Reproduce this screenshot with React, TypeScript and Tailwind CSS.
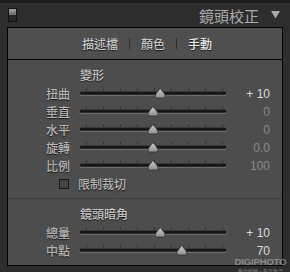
import React from 'react';

const TICKS = [7, 24, 41, 58, 75, 92, 109, 126, 143];

interface SliderProps {
  pos: number; // 0..1
}

function Slider({ pos }: SliderProps) {
  const cx = 2 + pos * 144;
  return (
    <svg width="148" height="18" viewBox="0 0 148 18" className="block">
      <defs>
        <linearGradient id="thumb" x1="0" y1="0" x2="0" y2="1">
          <stop offset="0" stopColor="#d0d0d0" />
          <stop offset="1" stopColor="#8c8c8c" />
        </linearGradient>
      </defs>
      {TICKS.map((x) => (
        <rect key={x} x={x} y={3} width={1} height={3} fill="#333" />
      ))}
      <rect x={0} y={6.5} width={148} height={4.5} rx={2.2} fill="#6c6c6c" />
      <rect x={0.5} y={6.5} width={147} height={3.2} rx={1.6} fill="#161616" />
      <path
        d={`M${cx} 3.5 L${cx + 4.2} 8.8 Q${cx + 6} 12.5 ${cx + 3.2} 13 L${cx - 3.2} 13 Q${cx - 6} 12.5 ${cx - 4.2} 8.8 Z`}
        fill="url(#thumb)"
        stroke="#2a2a2a"
        strokeWidth="0.7"
      />
    </svg>
  );
}

interface RowProps {
  label: string;
  pos: number;
  value: string;
  bright?: boolean;
}

function Row({ label, pos, value, bright }: RowProps) {
  return (
    <div className="flex h-[18px] items-center">
      <div className="w-[62px] text-right text-[12px] font-medium leading-none text-[#b6b6b6] [text-shadow:0_1px_1px_rgba(0,0,0,0.7)]">
        {label}
      </div>
      <div className="ml-[9px]">
        <Slider pos={pos} />
      </div>
      <div
        className={`w-[43px] text-right text-[12px] leading-[11px] [font-family:'Liberation_Sans',sans-serif] ${
          bright ? 'text-[#dcdcdc]' : 'text-[#8a8a8a]'
        }`}
      >
        {value}
      </div>
    </div>
  );
}

function Heading({ children }: { children: React.ReactNode }) {
  return (
    <div className="h-[16px] pl-[72px] text-[12px] font-medium leading-[16px] text-[#c4c4c4] [text-shadow:0_1px_1px_rgba(0,0,0,0.7)]">
      {children}
    </div>
  );
}

export default function App() {
  return (
    <div className="relative h-[272px] w-[290px] overflow-hidden bg-[#2d2d2d] [font-family:'Noto_Sans_CJK_TC','Liberation_Sans',sans-serif]">
      <div className="h-[3px] bg-[#1e1e1e]" />
      <div className="flex h-[24px] items-center pl-[8px] pr-[10px]">
        <div className="flex h-[14px] w-[9px] flex-col border border-[#111]">
          <div className="h-1/2 bg-gradient-to-b from-[#a0a0a0] to-[#6a6a6a]" />
          <div className="h-1/2 bg-[#262626]" />
        </div>
        <div className="flex-1" />
        <div className="text-[15px] leading-none text-[#ababab]">鏡頭校正</div>
        <div className="ml-[12px] text-[0px]">
          <svg width="9" height="8" viewBox="0 0 9 8">
            <path d="M0 0 L9 0 L4.5 7.5 Z" fill="#a8a8a8" />
          </svg>
        </div>
      </div>

      <div className="ml-[7px] h-[239px] w-[276px] border border-black bg-[#4d4d4d]">
        <div className="flex h-[32px] items-center justify-center border-b border-black bg-[#4f4f4f] pl-[4px] text-[12px] font-medium leading-none [text-shadow:0_1px_1px_rgba(0,0,0,0.7)]">
          <span className="text-[#c6c6c6]">描述檔</span>
          <span className="mx-[11px] h-[11px] w-px bg-[#2c2c2c]" />
          <span className="text-[#c6c6c6]">顏色</span>
          <span className="mx-[11px] h-[11px] w-px bg-[#2c2c2c]" />
          <span className="text-[#ececec]">手動</span>
        </div>

        <div className="pt-[7px]">
          <Heading>變形</Heading>
          <div className="mt-[2px]">
            <Row label="扭曲" pos={0.55} value="+ 10" bright />
            <Row label="垂直" pos={0.5} value="0" />
            <Row label="水平" pos={0.5} value="0" />
            <Row label="旋轉" pos={0.5} value="0.0" />
            <Row label="比例" pos={0.5} value="100" />
          </div>
          <div className="flex h-[18px] items-center pl-[51px]">
            <div className="h-[10px] w-[10px] border border-[#151515] bg-[#464646]" />
            <span className="ml-[9px] text-[12px] font-medium leading-none text-[#b6b6b6] [text-shadow:0_1px_1px_rgba(0,0,0,0.7)]">
              限制裁切
            </span>
          </div>
          <div className="mt-[5px] h-px bg-[#3f3f3f]" />
          <div className="mt-[7px]">
            <Heading>鏡頭暗角</Heading>
          </div>
          <div className="mt-[2px]">
            <Row label="總量" pos={0.55} value="+ 10" bright />
            <Row label="中點" pos={0.7} value="70" bright />
          </div>
        </div>
      </div>

      <div className="absolute left-[233px] top-[257px] flex w-[55px] flex-col items-center leading-none text-[#b4b4b4] opacity-60">
        <span className="text-[9.5px] font-bold tracking-[-0.1px] [font-family:'Liberation_Sans',sans-serif]">DIGIPHOTO</span>
        <span className="mt-[1px] text-[5px]">數位相機・影音生活</span>
      </div>
    </div>
  );
}
